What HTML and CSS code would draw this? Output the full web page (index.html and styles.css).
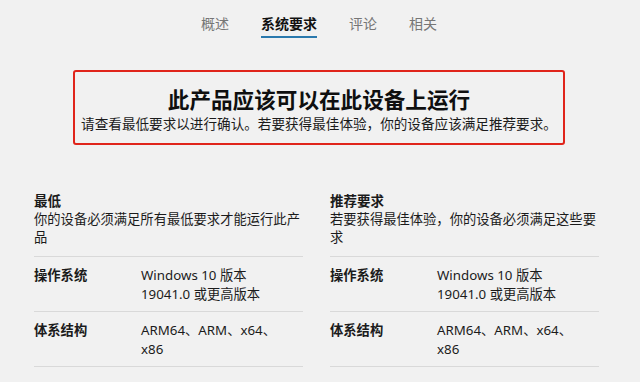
FILE: index.html
```html
<html>
<head>
	<meta charset="utf-8">
	<title>系统要求</title>
	<link rel="stylesheet" href="styles.css">
</head>
<body>
	<nav class="tabs">
		<span class="tab">概述</span>
		<span class="tab active">系统要求</span>
		<span class="tab">评论</span>
		<span class="tab">相关</span>
	</nav>

	<div class="notice">
		<h1>此产品应该可以在此设备上运行</h1>
		<p>请查看最低要求以进行确认。若要获得最佳体验，你的设备应该满足推荐要求。</p>
	</div>

	<div class="columns">
		<div class="col">
			<div class="col-head">
				<h2>最低</h2>
				<p>你的设备必须满足所有最低要求才能运行此产品</p>
			</div>
			<div class="row">
				<div class="label">操作系统</div>
				<div class="value">Windows 10 版本 19041.0 或更高版本</div>
			</div>
			<div class="row">
				<div class="label">体系结构</div>
				<div class="value">ARM64、ARM、x64、x86</div>
			</div>
		</div>
		<div class="col">
			<div class="col-head">
				<h2>推荐要求</h2>
				<p>若要获得最佳体验，你的设备必须满足这些要求</p>
			</div>
			<div class="row">
				<div class="label">操作系统</div>
				<div class="value">Windows 10 版本 19041.0 或更高版本</div>
			</div>
			<div class="row">
				<div class="label">体系结构</div>
				<div class="value">ARM64、ARM、x64、x86</div>
			</div>
		</div>
	</div>
</body>
</html>
```

FILE: styles.css
```css
body {
	background-color: #f1f1f1;
	font-family: "Noto Sans", "Noto Sans CJK SC", sans-serif;
	color: #1b1b1b;
	margin: 0;
}

.tabs {
	display: flex;
	justify-content: center;
	gap: 32px;
	padding-top: 14px;
	padding-right: 2px;
}

.tab {
	font-size: 14px;
	line-height: 20px;
	color: #767676;
	padding-bottom: 2px;
	border-bottom: 2px solid transparent;
}

.tab.active {
	color: #111;
	font-weight: bold;
	border-bottom-color: #2a79ad;
}

.notice {
	width: 488px;
	margin: 32px auto 0;
	border: 2px solid #e0241b;
	border-radius: 3px;
	text-align: center;
	padding: 13px 0 10px;
	position: relative;
	left: -1px;
}

.notice h1 {
	margin: 0;
	font-size: 21.6px;
	line-height: 30px;
	font-weight: bold;
	color: #0f0f0f;
}

.notice p {
	margin: 0;
	font-size: 13.6px;
	line-height: 18px;
}

.columns {
	display: grid;
	grid-template-columns: 269px 269px;
	gap: 27px;
	padding: 47px 0 0 34px;
}

.col-head {
	padding-bottom: 10px;
	border-bottom: 1px solid #d9d9d9;
}

.col-head h2 {
	margin: 0;
	font-size: 13.5px;
	line-height: 18px;
	font-weight: bold;
}

.col-head p {
	margin: 0;
	font-size: 13.3px;
	line-height: 18px;
}

.row {
	display: flex;
	padding: 9px 0 8px;
	border-bottom: 1px solid #d9d9d9;
	font-size: 13.3px;
	line-height: 18.5px;
}

.label {
	width: 107px;
	font-weight: bold;
}

.value {
	width: 135px;
}
```
